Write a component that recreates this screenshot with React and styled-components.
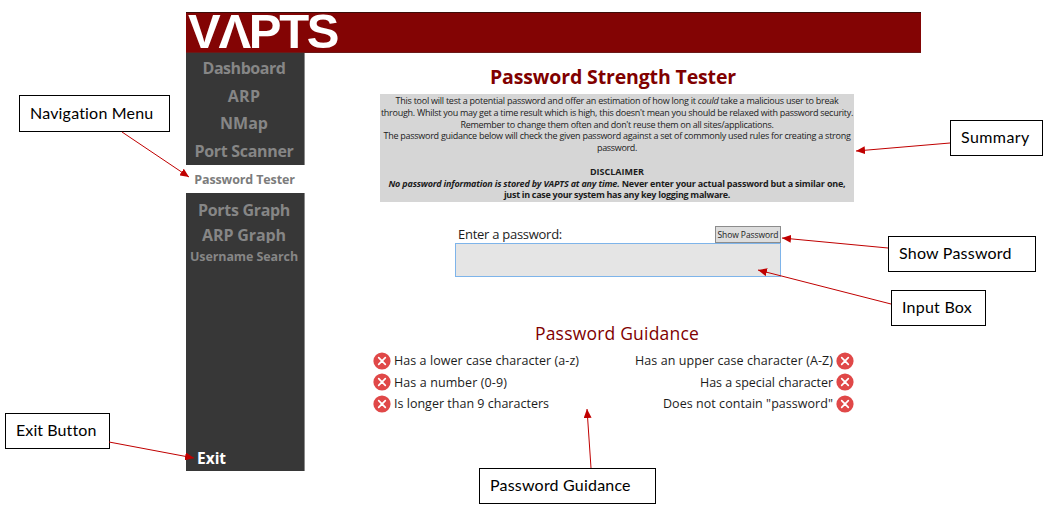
import React from "react";
import styled, { createGlobalStyle } from "styled-components";

const Global = createGlobalStyle`
  * { box-sizing: border-box; }
  body { margin: 0; background: #fff; font-family: "Open Sans", "Noto Sans", sans-serif; }
`;
const Page = styled.div`
  position: relative;
  width: 1055px;
  height: 513px;
  overflow: hidden;
  padding: 12px 0 0 186px;
`;
const Window = styled.div`
  width: 735px;
  height: 459px;
  display: flex;
  flex-direction: column;
`;
const Header = styled.header`
  height: 41px;
  background: #830404;
  border-top: 1px solid #3d0c08;
  border-bottom: 1px solid #6b1a18;
  padding-left: 2px;
`;
const Logo = styled.div`
  font: bold 49px/37px "Liberation Sans", sans-serif;
  letter-spacing: -2.3px;
  color: #fff;
  white-space: nowrap;
`;
const Body = styled.div`
  display: flex;
  flex: 1;
`;
const Sidebar = styled.nav`
  width: 119px;
  background: #373737;
  border-right: 1px solid #8a8a8a;
  display: flex;
  flex-direction: column;
`;
const Item = styled.div`
  height: ${p => p.$h}px;
  flex: none;
  display: flex;
  align-items: center;
  justify-content: center;
  overflow: hidden;
  white-space: nowrap;
  padding-right: 2px;
  margin-right: ${p => (p.$active ? "-1px" : "0")};
  font-weight: 700;
  font-size: ${p => p.$size}px;
  letter-spacing: ${p => p.$ls}px;
  color: ${p => (p.$active ? "#7c7c7c" : "#868686")};
  background: ${p => (p.$active ? "#fff" : "transparent")};
`;
const Exit = styled.div`
  margin-top: auto;
  height: 27px;
  padding-left: 11px;
  line-height: 28px;
  font-weight: 700;
  font-size: 15.5px;
  color: #fff;
`;
const Main = styled.main`
  flex: 1;
  display: flex;
  flex-direction: column;
`;
const Title = styled.h1`
  margin: 9px 0 0;
  height: 31px;
  line-height: 29px;
  text-align: center;
  font-size: 19.5px;
  letter-spacing: -0.15px;
  color: #800000;
`;
const Summary = styled.div`
  margin: 1px 0 0 75px;
  width: 474px;
  height: 108px;
  padding-top: 1px;
  background: #d6d6d6;
  font-size: 9px;
  color: #1c1c1c;
  text-align: center;
`;
const Line = styled.div`
  height: 11.8px;
  line-height: 11.8px;
  white-space: nowrap;
  font-weight: ${p => (p.$bold ? 700 : 400)};
  letter-spacing: ${p => p.$ls}px;
`;
const Form = styled.div`
  margin: 24px 0 0 150px;
  width: 326px;
`;
const FormTop = styled.div`
  display: flex;
  justify-content: space-between;
  align-items: flex-end;
  height: 17px;
`;
const Label = styled.label`
  padding-left: 3px;
  font-size: 13px;
  line-height: 18px;
  letter-spacing: -0.27px;
  color: #1c1c1c;
`;
const ShowButton = styled.div`
  width: 66px;
  height: 17px;
  border: 1px solid #8c8c8c;
  background: #ddd;
  font-size: 8.5px;
  line-height: 16px;
  letter-spacing: -0.09px;
  text-align: center;
  white-space: nowrap;
  color: #1c1c1c;
`;
const Input = styled.div`
  height: 34px;
  border: 1px solid #7eb4ea;
  background: #e5e5e5;
`;
const Subtitle = styled.h2`
  margin: 42px 0 0 8px;
  height: 31px;
  line-height: 28px;
  font-weight: 400;
  font-size: 17.5px;
  letter-spacing: 0.2px;
  color: #800000;
  text-align: center;
`;
const Rules = styled.div`
  margin-left: 68px;
  width: 481px;
  display: flex;
  flex-direction: column;
`;
const RuleRow = styled.div`
  display: flex;
  justify-content: space-between;
  height: 21.5px;
`;
const Rule = styled.div`
  display: flex;
  flex-direction: ${p => (p.$right ? "row-reverse" : "row")};
  align-items: center;
  gap: 3px;
  white-space: nowrap;
  font-size: 12.5px;
  letter-spacing: ${p => p.$ls}px;
  color: #1c1c1c;
`;
const Callout = styled.div`
  position: absolute;
  left: ${p => p.$x}px;
  top: ${p => p.$y}px;
  width: ${p => p.$w}px;
  height: ${p => p.$h}px;
  border: 1px solid #000;
  background: #fff;
  padding-left: 10px;
  line-height: ${p => p.$h - 4}px;
  font-family: Lato, sans-serif;
  font-size: 16px;
  letter-spacing: ${p => p.$ls}px;
  white-space: nowrap;
  color: #000;
`;
const Arrows = styled.svg`
  position: absolute;
  left: 0;
  top: 0;
  pointer-events: none;
`;

const Cross = () => (
  <svg width="18" height="18" viewBox="0 0 18 18">
    <circle cx="9" cy="9" r="8.6" fill="#e04848" />
    <path d="M5.7 5.7l6.6 6.6M12.3 5.7l-6.6 6.6" stroke="#fff" strokeWidth="1.7" strokeLinecap="round" />
  </svg>
);

const nav = [
  { text: "Dashboard", h: 29, size: 16, ls: -0.45 },
  { text: "ARP", h: 27, size: 16, ls: 0.3 },
  { text: "NMap", h: 28, size: 16, ls: 0 },
  { text: "Port Scanner", h: 28, size: 16, ls: -0.31 },
  { text: "Password Tester", h: 28, size: 12.5, ls: -0.13, active: true },
  { text: "Ports Graph", h: 34, size: 16, ls: -0.31 },
  { text: "ARP Graph", h: 16, size: 16, ls: -0.11 },
  { text: "Username Search", h: 27, size: 12.5, ls: -0.1 },
];
const rules = [
  [["Has a lower case character (a-z)", 0.06], ["Has an upper case character (A-Z)", 0.07]],
  [["Has a number (0-9)", 0.1], ["Has a special character", -0.04]],
  [["Is longer than 9 characters", 0.01], ['Does not contain "password"', 0.045]],
];
const callouts = [
  { text: "Navigation Menu", x: 19, y: 95, w: 151, h: 37, ls: 0.19 },
  { text: "Exit Button", x: 5, y: 413, w: 105, h: 36, ls: 0.09 },
  { text: "Summary", x: 950, y: 120, w: 93, h: 36, ls: 0.42 },
  { text: "Show Password", x: 888, y: 236, w: 148, h: 36, ls: 0.22 },
  { text: "Input Box", x: 891, y: 290, w: 95, h: 36, ls: 0.23 },
  { text: "Password Guidance", x: 479, y: 468, w: 177, h: 36, ls: 0.2 },
];
const arrows = [
  [122, 132, 189, 177],
  [109, 442, 194, 458],
  [950, 143, 856, 151],
  [888, 248, 782, 238],
  [891, 304, 758, 270],
  [591, 468, 587, 409],
];

export default function App() {
  return (
    <Page>
      <Global />
      <Window>
        <Header>
          <Logo>VΛPTS</Logo>
        </Header>
        <Body>
          <Sidebar>
            {nav.map(n => (
              <Item key={n.text} $h={n.h} $size={n.size} $ls={n.ls} $active={n.active}>{n.text}</Item>
            ))}
            <Exit>Exit</Exit>
          </Sidebar>
          <Main>
            <Title>Password Strength Tester</Title>
            <Summary>
              <Line $ls={-0.25}>This tool will test a potential password and offer an estimation of how long it <i>could</i> take a malicious user to break</Line>
              <Line $ls={-0.27}>through. Whilst you may get a time result which is high, this doesn't mean you should be relaxed with password security.</Line>
              <Line $ls={-0.28}>Remember to change them often and don't reuse them on all sites/applications.</Line>
              <Line $ls={-0.265}>The password guidance below will check the given password against a set of commonly used rules for creating a strong</Line>
              <Line $ls={-0.33}>password.</Line>
              <Line />
              <Line $bold $ls={0}>DISCLAIMER</Line>
              <Line $bold $ls={-0.195}><i>No password information is stored by VAPTS at any time.</i> Never enter your actual password but a similar one,</Line>
              <Line $bold $ls={-0.3}>just in case your system has any key logging malware.</Line>
            </Summary>
            <Form>
              <FormTop>
                <Label>Enter a password:</Label>
                <ShowButton>Show Password</ShowButton>
              </FormTop>
              <Input />
            </Form>
            <Subtitle>Password Guidance</Subtitle>
            <Rules>
              {rules.map(([left, right]) => (
                <RuleRow key={left[0]}>
                  <Rule $ls={left[1]}><Cross />{left[0]}</Rule>
                  <Rule $right $ls={right[1]}><Cross />{right[0]}</Rule>
                </RuleRow>
              ))}
            </Rules>
          </Main>
        </Body>
      </Window>
      {callouts.map(c => (
        <Callout key={c.text} $x={c.x} $y={c.y} $w={c.w} $h={c.h} $ls={c.ls}>{c.text}</Callout>
      ))}
      <Arrows width="1055" height="513">
        <defs>
          <marker id="head" markerUnits="userSpaceOnUse" markerWidth="9" markerHeight="8" refX="9" refY="4" orient="auto">
            <path d="M0 0L9 4L0 8Z" fill="#c00000" />
          </marker>
        </defs>
        {arrows.map(([x1, y1, x2, y2]) => (
          <line key={x1} x1={x1} y1={y1} x2={x2} y2={y2} stroke="#c00000" markerEnd="url(#head)" />
        ))}
      </Arrows>
    </Page>
  );
}
